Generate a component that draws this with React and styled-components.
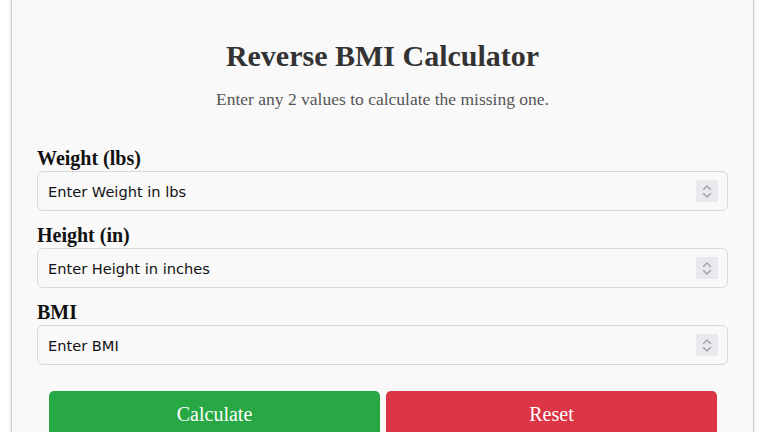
import React from 'react';
import styled, { createGlobalStyle } from 'styled-components';

const GlobalStyle = createGlobalStyle`
    html, body {
        margin: 0;
        padding: 0;
        background: #ffffff;
        font-family: "Liberation Serif", "Times New Roman", serif;
        overflow: hidden;
    }
`

const Page = styled.div`
    padding: 0 14px 0 11px;
`

const Card = styled.div`
    box-sizing: border-box;
    width: 743px;
    margin-top: -21px;
    padding: 59px 25px 30px;
    background: #f9f9f9;
    border: 1px solid #cccccc;
    border-radius: 8px;
    box-shadow: 0 0 4px rgba(0, 0, 0, 0.12);
`

const Title = styled.h1`
    margin: 0;
    text-align: center;
    font-size: 30px;
    line-height: 34px;
    font-weight: bold;
    color: #333333;
`

const Subtitle = styled.p`
    margin: 16px 0 38px;
    text-align: center;
    font-size: 17.5px;
    line-height: 20px;
    color: #555555;
`

const Field = styled.div`
    margin-bottom: 13px;
`

const Label = styled.label`
    display: block;
    margin-bottom: 1px;
    font-size: 20px;
    line-height: 23px;
    font-weight: bold;
    color: #111111;
`

const InputWrap = styled.div`
    position: relative;
`

const Input = styled.input`
    box-sizing: border-box;
    display: block;
    width: 100%;
    height: 40px;
    padding: 1px 40px 0 10px;
    border: 1px solid #d9d9d9;
    border-radius: 6px;
    background: #f9f9f9;
    font-family: "DejaVu Sans", Verdana, sans-serif;
    font-size: 14.6px;
    color: #000000;
    outline: none;
    -moz-appearance: textfield;
    &::placeholder {
        color: #111111;
        opacity: 1;
    }
    &::-webkit-inner-spin-button,
    &::-webkit-outer-spin-button {
        -webkit-appearance: none;
        margin: 0;
    }
`

const Spinner = styled.div`
    position: absolute;
    top: 9px;
    right: 10px;
    width: 22px;
    height: 22px;
    display: flex;
    flex-direction: column;
    align-items: center;
    justify-content: center;
    gap: 3px;
    background: #e9e9ed;
    border-radius: 1px;
    pointer-events: none;
`

const Actions = styled.div`
    display: flex;
    gap: 6px;
    margin-top: 26px;
    padding: 0 11px 0 12px;
`

const Button = styled.button`
    flex: 1;
    padding: 12px 0;
    border: none;
    border-radius: 5px;
    background: ${p => p.$bg};
    color: #ffffff;
    font-family: "Liberation Serif", "Times New Roman", serif;
    font-size: 20px;
    line-height: 23px;
    cursor: pointer;
`

const Chevron = ({ up }) => (
    <svg width="10" height="5" viewBox="0 0 10 5" fill="none">
        <path
            d={up ? 'M1.5 4.5L5 1L8.5 4.5' : 'M1.5 0.5L5 4L8.5 0.5'}
            stroke="#9a9aa4"
            strokeWidth="1.2"
            strokeLinecap="round"
            strokeLinejoin="round"
        />
    </svg>
)

const fields = [
    { id: 'weight', label: 'Weight (lbs)', placeholder: 'Enter Weight in lbs' },
    { id: 'height', label: 'Height (in)', placeholder: 'Enter Height in inches' },
    { id: 'bmi', label: 'BMI', placeholder: 'Enter BMI' },
]

export default function App() {
    return (
        <>
            <GlobalStyle />
            <Page>
                <Card>
                    <Title>Reverse BMI Calculator</Title>
                    <Subtitle>Enter any 2 values to calculate the missing one.</Subtitle>
                    {fields.map(f => (
                        <Field key={f.id}>
                            <Label htmlFor={f.id}>{f.label}</Label>
                            <InputWrap>
                                <Input id={f.id} type="number" placeholder={f.placeholder} />
                                <Spinner>
                                    <Chevron up />
                                    <Chevron />
                                </Spinner>
                            </InputWrap>
                        </Field>
                    ))}
                    <Actions>
                        <Button $bg="#28a745">Calculate</Button>
                        <Button $bg="#dc3545">Reset</Button>
                    </Actions>
                </Card>
            </Page>
        </>
    );
}
